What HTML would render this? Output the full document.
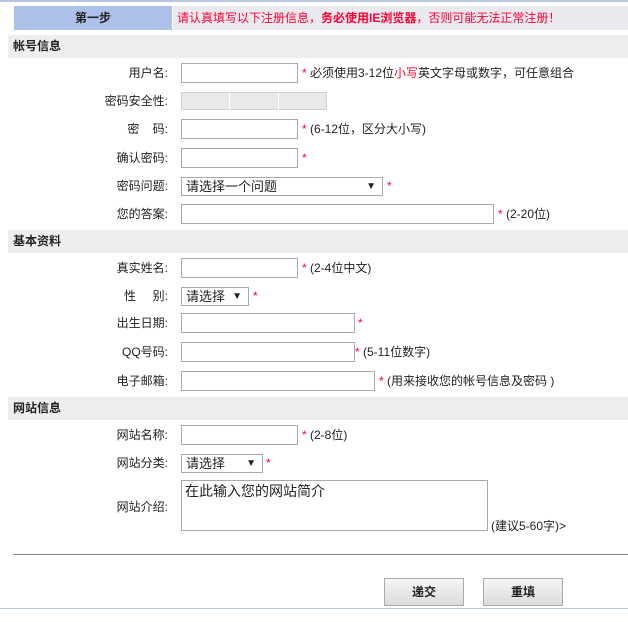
<!DOCTYPE html>
<html><head><meta charset="utf-8"><style>
*{margin:0;padding:0;box-sizing:border-box}
body{width:628px;height:622px;background:#fff;position:relative;overflow:hidden;font-family:"Liberation Sans","Microsoft YaHei","Noto Sans CJK SC",sans-serif;font-size:12px;color:#222}
.a{position:absolute;white-space:nowrap}
.lbl{position:absolute;right:460px;line-height:20px;text-align:right}
.in{position:absolute;left:181px;height:20px;border:1px solid #a9a9a9;background:#fff}
.sel{position:absolute;left:181px;height:19px;border:1px solid #a9a9a9;background:#fff;font-size:13px;line-height:17px;padding-left:4px}
.sel i{position:absolute;right:6px;top:0;font-style:normal;font-size:10px}
.sec{position:absolute;left:8px;width:620px;height:23px;background:#eee;font-weight:bold;line-height:23px;padding-left:5px}
.r{color:#f03}
.h{position:absolute;line-height:20px}
.btn{position:absolute;top:578px;width:80px;height:28px;border:1px solid #aaa;background:linear-gradient(#f6f6f6,#dcdcdc);font-weight:bold;text-align:center;line-height:26px}
</style></head><body>
<div class="a" style="left:0;top:0;width:628px;height:2px;background:#b8c6e4"></div>
<div class="a" style="left:14px;top:6px;width:158px;height:24px;background:#adc0ea;text-align:center;line-height:24px;font-weight:bold">第一步</div>
<div class="a" style="left:173px;top:6px;width:455px;height:24px;background:#e9e9ee;line-height:24px;padding-left:4px;color:#f03">请认真填写以下注册信息，<b>务必使用IE浏览器</b>，否则可能无法正常注册！</div>

<div class="sec" style="top:35px">帐号信息</div>
<div class="lbl" style="top:63px">用户名:</div><div class="in" style="top:63px;width:117px"></div>
<div class="h" style="left:302px;top:63px"><span class="r">*</span> 必须使用3-12位<span class="r">小写</span>英文字母或数字，可任意组合</div>
<div class="lbl" style="top:91px">密码安全性:</div>
<div class="a" style="left:181px;top:92px;width:146px;height:18px;background:#e9e9e9;border:1px solid #d0d0d0"></div>
<div class="a" style="left:229px;top:92px;width:1px;height:18px;background:#fff"></div>
<div class="a" style="left:278px;top:92px;width:1px;height:18px;background:#fff"></div>
<div class="lbl" style="top:119px">密&nbsp;&nbsp;&nbsp;&nbsp;码:</div><div class="in" style="top:119px;width:117px"></div>
<div class="h" style="left:302px;top:119px"><span class="r">*</span> (6-12位，区分大小写)</div>
<div class="lbl" style="top:148px">确认密码:</div><div class="in" style="top:148px;width:117px"></div>
<div class="h r" style="left:302px;top:148px">*</div>
<div class="lbl" style="top:176px">密码问题:</div><div class="sel" style="top:177px;width:202px">请选择一个问题<i>▼</i></div>
<div class="h r" style="left:387px;top:176px">*</div>
<div class="lbl" style="top:204px">您的答案:</div><div class="in" style="top:204px;width:313px"></div>
<div class="h" style="left:498px;top:204px"><span class="r">*</span> (2-20位)</div>

<div class="sec" style="top:230px">基本资料</div>
<div class="lbl" style="top:258px">真实姓名:</div><div class="in" style="top:258px;width:117px"></div>
<div class="h" style="left:302px;top:258px"><span class="r">*</span> (2-4位中文)</div>
<div class="lbl" style="top:286px">性&nbsp;&nbsp;&nbsp;&nbsp;&nbsp;别:</div><div class="sel" style="top:287px;width:68px">请选择<i>▼</i></div>
<div class="h r" style="left:253px;top:286px">*</div>
<div class="lbl" style="top:313px">出生日期:</div><div class="in" style="top:313px;width:174px"></div>
<div class="h r" style="left:358px;top:313px">*</div>
<div class="lbl" style="top:342px">QQ号码:</div><div class="in" style="top:342px;width:174px"></div>
<div class="h" style="left:355px;top:342px"><span class="r">*</span> (5-11位数字)</div>
<div class="lbl" style="top:371px">电子邮箱:</div><div class="in" style="top:371px;width:194px"></div>
<div class="h" style="left:379px;top:371px"><span class="r">*</span> (用来接收您的帐号信息及密码 )</div>

<div class="sec" style="top:397px">网站信息</div>
<div class="lbl" style="top:425px">网站名称:</div><div class="in" style="top:425px;width:117px"></div>
<div class="h" style="left:302px;top:425px"><span class="r">*</span> (2-8位)</div>
<div class="lbl" style="top:453px">网站分类:</div><div class="sel" style="top:454px;width:82px">请选择<i>▼</i></div>
<div class="h r" style="left:266px;top:453px">*</div>
<div class="lbl" style="top:497px">网站介绍:</div>
<div class="in" style="top:480px;width:307px;height:51px;font-size:14px;line-height:18px;padding:1px 3px">在此输入您的网站简介</div>
<div class="h" style="left:491px;top:516px">(建议5-60字)&gt;</div>

<div class="a" style="left:13px;top:554px;width:615px;height:1px;background:#888"></div>
<div class="btn" style="left:384px">递交</div>
<div class="btn" style="left:483px">重填</div>
<div class="a" style="left:0;top:608px;width:628px;height:1px;background:#b8c6e4"></div>
</body></html>
